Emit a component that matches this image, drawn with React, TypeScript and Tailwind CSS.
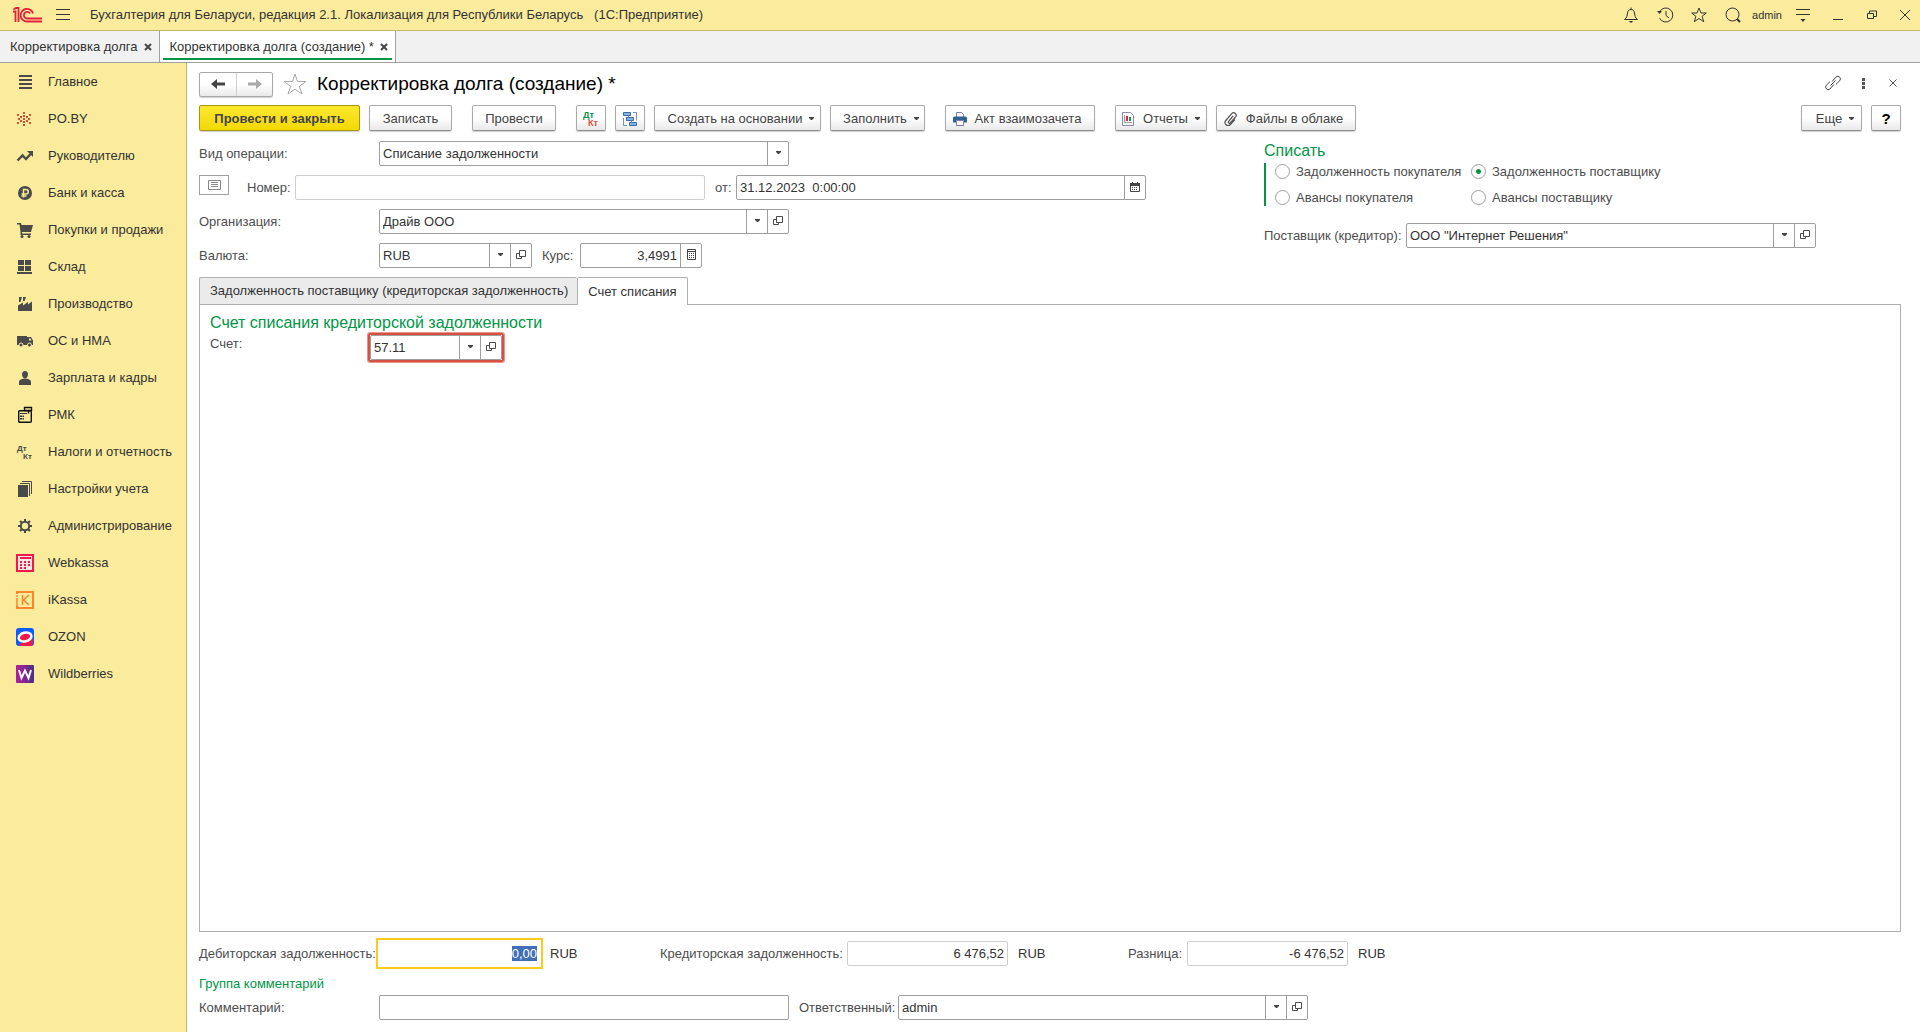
import { useEffect, useRef } from 'react';

const svgProps = {
  width: 18,
  height: 18,
  viewBox: '0 0 18 18',
  fill: 'none',
  'aria-hidden': true,
} as const;

// Section icons, drawn on an 18px canvas
const icons = {
  main: (
    <svg {...svgProps} fill="#4a4a4a">
      <path d="M3 2h13v2H3zM3 6h13v2H3zM3 10h13v2H3zM3 14h13v2H3z" />
    </svg>
  ),
  poby: (
    <svg {...svgProps} fill="#d8513f">
      <path d="M7 2h2v2H7zM7 5h2v2H7zM7 8h2v2H7zM7 11h2v2H7zM7 14h2v2H7zM4 6h2v2H4zM4 10h2v2H4zM10 6h2v2h-2zM10 10h2v2h-2zM1 4h2v2H1zM2 8h2v2H2zM1 12h2v2H1zM13 4h2v2h-2zM12 8h2v2h-2zM13 12h2v2h-2z" />
    </svg>
  ),
  chief: (
    <svg {...svgProps}>
      <path d="M1.500 13.500L6.500 8.500L10 12L14.500 7" stroke="#4a4a4a" strokeWidth="2.400" />
      <path d="M11 4h6v6z" fill="#4a4a4a" />
    </svg>
  ),
  bank: (
    <svg {...svgProps}>
      <circle cx="9" cy="9" r="7" fill="#4a4a4a" />
      <path d="M7.500 13.500V5.500h2.500a2.200 2.200 0 0 1 0 4.500H5.500M5.500 12h5" stroke="#faeb9d" strokeWidth="1.500" />
    </svg>
  ),
  trade: (
    <svg {...svgProps} fill="#4a4a4a">
      <path d="M1 2h4l.5 2H17l-2 7H6v1.500h9V14H4.500V11L3.500 3.500H1z" />
      <circle cx="6" cy="15.500" r="1.500" />
      <circle cx="13" cy="15.500" r="1.500" />
    </svg>
  ),
  stock: (
    <svg {...svgProps} fill="#4a4a4a">
      <path d="M2 2h6v5H2zM9 2h6v5H9zM2 8h6v5H2zM9 8h6v5H9zM1 14h15v2H1z" />
    </svg>
  ),
  production: (
    <svg {...svgProps} fill="#4a4a4a">
      <path d="M2 16V10.500l5-3v3l5-3.500v2.500l4-3V16zM3 2h3L4.500 7H3zM7 2h3L8.500 6H7z" />
    </svg>
  ),
  assets: (
    <svg {...svgProps} fill="#4a4a4a">
      <path d="M1 4h10v9H1z" />
      <path fillRule="evenodd" d="M11 5h4l2 3.500V13h-6zM13 6.500v2h2.500l-1-2z" />
      <circle cx="5" cy="13" r="2" stroke="#faeb9d" />
      <circle cx="13.500" cy="13" r="2" stroke="#faeb9d" />
    </svg>
  ),
  salary: (
    <svg {...svgProps} fill="#4a4a4a">
      <path d="M9 2c2 0 3 1.300 3 3.200S10.800 9.500 9 9.500 6 7.100 6 5.200 7 2 9 2z" />
      <path d="M3 16v-3c0-1.700 1.500-2.500 4-3.200h4c2.500.7 4 1.500 4 3.200v3z" />
    </svg>
  ),
  rmk: (
    <svg {...svgProps}>
      <rect x="2.700" y="4.700" width="12.600" height="11.600" rx="1" stroke="#111" strokeWidth="1.400" />
      <path d="M8.500 1.500h7v3h-7zM12.500 4.500v3" stroke="#111" strokeWidth="1.400" />
      <path d="M4 7h7v1H4zM4 9.500h2v1.500H4zM6.500 9.500H8v1.500H6.500zM4 12h2v1.500H4zM6.500 12H8v1.500H6.500z" fill="#333" />
    </svg>
  ),
  taxes: (
    <svg {...svgProps} fill="#4a4a4a" className="font-bold">
      <text x="1" y="8" fontSize="8">Дт</text>
      <text x="7" y="16" fontSize="8">Кт</text>
    </svg>
  ),
  settings: (
    <svg {...svgProps}>
      <path d="M2 5h10v12H2z" fill="#4a4a4a" />
      <path d="M4 3.500h9.500V16M6 1.500h9.500V14" stroke="#4a4a4a" />
    </svg>
  ),
  admin: (
    <svg {...svgProps} stroke="#4a4a4a" strokeWidth="2">
      <circle cx="9" cy="9" r="4.200" />
      <path d="M9 2v2.500M9 13.500V16M2 9h2.500M13.500 9H16M4 4l1.800 1.800M12.200 12.200L14 14M14 4l-1.800 1.800M5.800 12.200L4 14" />
    </svg>
  ),
  webkassa: (
    <svg {...svgProps}>
      <path d="M1 1h16v16H1z" fill="#fbe9e3" stroke="#f5164b" strokeWidth="2" />
      <path d="M4 3h11v2H4zM4 7h2v2H4zM8 7h2v2H8zM12 7h2v2h-2zM4 10h2v2H4zM8 10h2v2H8zM12 10h2v2h-2zM4 13h2v2H4zM8 13h2v2H8z" fill="#f5164b" />
    </svg>
  ),
  ikassa: (
    <svg {...svgProps} stroke="#fb852c">
      <path d="M1 3V1h16v16H1v-2" strokeWidth="2" />
      <path d="M1 4v2M1 7v9M6.500 4v10M13 4L7.500 9l5.500 5" strokeWidth="1.500" />
    </svg>
  ),
  ozon: (
    <svg {...svgProps}>
      <rect width="18" height="18" rx="3" fill="#0a5cff" />
      <path d="M3 16l14-5v4a3 3 0 0 1-3 3H5a3 3 0 0 1-2-2z" fill="#f5164b" />
      <ellipse cx="9" cy="9" rx="6.500" ry="4.300" transform="rotate(-14 9 9)" fill="#f5164b" stroke="#fff" strokeWidth="2.500" />
    </svg>
  ),
  wildberries: (
    <svg {...svgProps}>
      <defs>
        <linearGradient id="wb" x1="0" x2="1">
          <stop stopColor="#b01e9e" />
          <stop offset="1" stopColor="#4b2f86" />
        </linearGradient>
      </defs>
      <rect width="18" height="18" rx="1" fill="url(#wb)" />
      <path d="M3 5l2.500 8L9 5.500l3.500 7.500L15 5" stroke="#fff" strokeWidth="2" />
    </svg>
  ),
};

const sections = [
  { title: 'Главное', icon: icons.main },
  { title: 'PO.BY', icon: icons.poby },
  { title: 'Руководителю', icon: icons.chief },
  { title: 'Банк и касса', icon: icons.bank },
  { title: 'Покупки и продажи', icon: icons.trade },
  { title: 'Склад', icon: icons.stock },
  { title: 'Производство', icon: icons.production },
  { title: 'ОС и НМА', icon: icons.assets },
  { title: 'Зарплата и кадры', icon: icons.salary },
  { title: 'РМК', icon: icons.rmk },
  { title: 'Налоги и отчетность', icon: icons.taxes },
  { title: 'Настройки учета', icon: icons.settings },
  { title: 'Администрирование', icon: icons.admin },
  { title: 'Webkassa', icon: icons.webkassa },
  { title: 'iKassa', icon: icons.ikassa },
  { title: 'OZON', icon: icons.ozon },
  { title: 'Wildberries', icon: icons.wildberries },
];

const writeOffKinds = [
  { id: 'buyer-debt', title: 'Задолженность покупателя' },
  { id: 'supplier-debt', title: 'Задолженность поставщику' },
  { id: 'buyer-advance', title: 'Авансы покупателя' },
  { id: 'supplier-advance', title: 'Авансы поставщику' },
];

function Caret() {
  return (
    <svg width="5" height="3" viewBox="0 0 5 3" aria-hidden="true" className="shrink-0">
      <path d="M0 0h5v1L3 3H2L0 1z" fill="#444" />
    </svg>
  );
}

const fieldIcons = {
  list: <Caret />,
  open: (
    <svg width="10" height="10" viewBox="0 0 10 10" fill="none" stroke="#4a4a4a" aria-hidden="true">
      <path d="M3.500.5h6v6h-6zM3 3.500H.5v5h5V7" />
    </svg>
  ),
  calendar: (
    <svg width="10" height="10" viewBox="0 0 10 10" fill="none" aria-hidden="true">
      <path d="M.5 1.500h9v8h-9z" stroke="#444" />
      <path d="M0 1h10v3H0zM2 0h1v1H2zM7 0h1v1H7zM2 5h1v1H2zM4 5h1v1H4zM6 5h1v1H6zM2 7h1v1H2zM4 7h1v1H4zM6 7h1v1H6z" fill="#444" />
    </svg>
  ),
  calc: (
    <svg width="9" height="11" viewBox="0 0 9 11" fill="none" aria-hidden="true">
      <path d="M.5.500h8v10h-8zM1 2.500h7" stroke="#444" />
      <path d="M2 4h1v1H2zM4 4h1v1H4zM6 4h1v1H6zM2 6h1v1H2zM4 6h1v1H4zM6 6h1v1H6zM2 8h1v1H2zM4 8h1v1H4zM6 8h1v1H6z" fill="#444" />
    </svg>
  ),
};

const fieldButtonTitles = {
  list: 'Выбрать из списка',
  open: 'Открыть',
  calendar: 'Календарь',
  calc: 'Калькулятор',
};

interface FieldProps {
  id: string;
  value?: string;
  width: string;
  buttons?: (keyof typeof fieldIcons)[];
  right?: boolean;
  muted?: boolean;
}

function Field({ id, value = '', width, buttons = [], right, muted }: FieldProps) {
  return (
    <div className={`${width} flex h-[25px] rounded-xs border bg-white ${muted ? 'border-[#cfcfcf]' : 'border-[#9e9e9e]'}`}>
      <input
        id={id}
        type="text"
        defaultValue={value}
        readOnly={muted}
        className={`min-w-0 flex-1 bg-transparent px-[3px] text-[#333] outline-none ${right ? 'text-right' : ''}`}
      />
      {buttons.map((name) => (
        <button
          key={name}
          type="button"
          aria-label={fieldButtonTitles[name]}
          className="flex w-[21px] shrink-0 items-center justify-center border-l border-[#9e9e9e] pb-[2px]"
        >
          {fieldIcons[name]}
        </button>
      ))}
    </div>
  );
}

interface ToolButtonProps {
  children?: React.ReactNode;
  label?: string;
  className?: string;
  menu?: boolean;
}

function ToolButton({ children, label, className = '', menu }: ToolButtonProps) {
  return (
    <button
      type="button"
      aria-label={label}
      className={`flex h-[26px] shrink-0 items-center justify-center whitespace-nowrap rounded-xs border border-[#a9a9a9] border-b-[#8f8f8f] bg-linear-to-b from-white from-50% to-[#e9e9e9] pt-px shadow-[0_1px_1px_#d0d0d0] ${className}`}
    >
      {children}
      {menu && <span className="ml-[7px]"><Caret /></span>}
    </button>
  );
}

function TitleBar() {
  return (
    <header className="flex h-[31px] items-center border-b border-[#c2b763] bg-[#faeb9d] pl-3">
      <svg width="31" height="16" viewBox="0 0 31 16" fill="none" stroke="#e6203a" strokeWidth="1.800" role="img" aria-label="1С">
        <path d="M1 4.500h2.500v10.500M1.500 2.500L4 1h2.500v14" />
        <path d="M21 6.500a6.300 6.300 0 1 0-6 8h15M18 6.500a3.300 3.300 0 1 0-3 5h15" />
      </svg>
      <button type="button" aria-label="Меню функций" className="ml-3">
        <svg width="16" height="14" viewBox="0 0 16 14" stroke="#333" aria-hidden="true">
          <path d="M1 1.500h14M1 6.500h14M1 11.500h14" />
        </svg>
      </button>
      <span className="ml-[19px] flex-1 whitespace-pre text-[#333]">
        Бухгалтерия для Беларуси, редакция 2.1. Локализация для Республики Беларусь   (1С:Предприятие)
      </span>
      <div className="flex items-center">
        <button type="button" aria-label="Уведомления" className="flex w-[34px] justify-center">
          <svg width="16" height="16" viewBox="0 0 16 16" fill="none" stroke="#333" aria-hidden="true">
            <path d="M1.500 12.500c2.500-2 2.500-3.500 3-6.500C5 3.500 6 2.500 8 2.500s3 1 3.500 3.500c.5 3 .5 4.500 3 6.500zM8 .5v2" />
            <path d="M6 14h4l-1 1.500H7z" fill="#333" stroke="none" />
          </svg>
        </button>
        <button type="button" aria-label="История" className="flex w-[34px] justify-center">
          <svg width="17" height="16" viewBox="0 0 17 16" fill="none" stroke="#333" aria-hidden="true">
            <path d="M2.500 5a7 7 0 1 1 0 6M9 4v4.500l3 2.500" />
            <path d="M0 4l5 0-2.500 3z" fill="#333" stroke="none" />
          </svg>
        </button>
        <button type="button" aria-label="Избранное" className="flex w-[34px] justify-center">
          <svg width="16" height="16" viewBox="0 0 16 16" fill="none" stroke="#333" aria-hidden="true">
            <path d="M8 1l2 5h5.300l-4.200 3.300 1.600 5.400L8 11.500l-4.700 3.200 1.600-5.400L.7 6H6z" />
          </svg>
        </button>
        <button type="button" aria-label="Поиск" className="flex w-[34px] justify-center">
          <svg width="16" height="16" viewBox="0 0 16 16" fill="none" stroke="#333" aria-hidden="true">
            <circle cx="7.500" cy="7.500" r="6.500" />
            <path d="M12 12l3 3" strokeWidth="2" />
          </svg>
        </button>
        <span className="mx-[2px] text-[11px] text-[#333]">admin</span>
        <button type="button" aria-label="Сервис" className="flex w-[38px] justify-center">
          <svg width="14" height="14" viewBox="0 0 14 14" aria-hidden="true">
            <path d="M0 1.500h14M0 6.500h14" stroke="#333" />
            <path d="M4.500 11h5L7 14z" fill="#333" />
          </svg>
        </button>
        <button type="button" aria-label="Свернуть" className="flex w-8 justify-center">
          <svg width="10" height="10" viewBox="0 0 10 10" stroke="#333" aria-hidden="true">
            <path d="M0 9.500h10" />
          </svg>
        </button>
        <button type="button" aria-label="Развернуть" className="flex w-9 justify-center">
          <svg width="10" height="10" viewBox="0 0 10 10" fill="none" stroke="#333" aria-hidden="true">
            <path d="M.5 3.500h6v5h-6zM2.500 3V1h7v5.500H7" />
          </svg>
        </button>
        <button type="button" aria-label="Закрыть" className="flex w-[30px] justify-center">
          <svg width="10" height="10" viewBox="0 0 10 10" stroke="#333" aria-hidden="true">
            <path d="M0 0l10 10M10 0L0 10" />
          </svg>
        </button>
      </div>
    </header>
  );
}

function CloseMark() {
  return (
    <svg width="8" height="8" viewBox="0 0 8 8" stroke="#444" strokeWidth="2" aria-hidden="true">
      <path d="M1 1l6 6M7 1L1 7" />
    </svg>
  );
}

function WindowTabs() {
  return (
    <nav className="flex h-8 border-b border-[#a0a0a0] bg-[#f1f1f1] text-[#333]">
      <div className="flex items-center gap-[6px] border-r border-[#a0a0a0] pl-[10px] pr-[7px]">
        <a href="#list">Корректировка долга</a>
        <button type="button" aria-label="Закрыть вкладку"><CloseMark /></button>
      </div>
      <div className="border-r border-[#a0a0a0] bg-white px-[3px]">
        <div className="flex h-[29px] items-center gap-[6px] border-b-2 border-[#009646] pl-[7px] pr-1 pt-1">
          <a href="#new">Корректировка долга (создание) *</a>
          <button type="button" aria-label="Закрыть вкладку"><CloseMark /></button>
        </div>
      </div>
    </nav>
  );
}

function Sidebar() {
  return (
    <aside className="w-[187px] shrink-0 border-r border-[#c2b763] bg-[#faeb9d]">
      {sections.map((section) => (
        <a key={section.title} href="#section" className="flex h-[37px] items-center gap-[14px] whitespace-nowrap pl-4 pt-px text-[#333]">
          {section.icon}
          {section.title}
        </a>
      ))}
    </aside>
  );
}

function FormHeader() {
  return (
    <div className="-mr-2 flex h-[26px] items-center">
      <div className="flex h-[25px] rounded-xs border border-[#a9a9a9] bg-linear-to-b from-white from-50% to-[#e9e9e9] shadow-[0_1px_1px_#d0d0d0]">
        <button type="button" aria-label="Назад" className="flex w-9 items-center justify-center">
          <svg width="14" height="10" viewBox="0 0 14 10" aria-hidden="true">
            <path d="M0 5l6-5v3.500h8v3H6V10z" fill="#444" />
          </svg>
        </button>
        <button type="button" aria-label="Вперед" className="flex w-9 items-center justify-center border-l border-[#d0d0d0]">
          <svg width="14" height="10" viewBox="0 0 14 10" aria-hidden="true">
            <path d="M14 5L8 0v3.500H0v3h8V10z" fill="#aaa" />
          </svg>
        </button>
      </div>
      <button type="button" aria-label="Добавить в избранное" className="ml-[10px]">
        <svg width="24" height="22" viewBox="0 0 24 22" fill="none" stroke="#aaa" aria-hidden="true">
          <path d="M12 1l2.500 7.500H23l-6.700 4.800L19 21l-7-4.800L5 21l2.700-7.700L1 8.500h8.500z" />
        </svg>
      </button>
      <h1 className="ml-[10px] flex-1 text-[19px] leading-6 text-black">Корректировка долга (создание) *</h1>
      <button type="button" aria-label="Получить ссылку" className="flex w-8 justify-center pb-[2px]">
        <svg width="16" height="16" viewBox="0 0 16 16" fill="none" stroke="#444" aria-hidden="true">
          <path d="M7 6.500l4.200-4.600a2.600 2.600 0 0 1 3.600 3.700L11 9.300M9 9.500l-4.200 4.600a2.600 2.600 0 0 1-3.600-3.700L5 6.700M5.500 10.500l5-5" />
        </svg>
      </button>
      <button type="button" aria-label="Дополнительно" className="flex w-7 justify-center pb-[2px]">
        <svg width="3" height="11" viewBox="0 0 3 11" fill="#555" aria-hidden="true">
          <path d="M0 0h3v3H0zM0 4h3v3H0zM0 8h3v3H0z" />
        </svg>
      </button>
      <button type="button" aria-label="Закрыть форму" className="flex w-8 justify-center pb-[2px]">
        <svg width="8" height="8" viewBox="0 0 8 8" stroke="#555" aria-hidden="true">
          <path d="M.5.5l7 7M7.500.5l-7 7" />
        </svg>
      </button>
    </div>
  );
}

function Toolbar() {
  return (
    <div className="mt-2 flex gap-[9px] text-[#444]">
      <button
        type="button"
        className="h-[26px] w-[161px] shrink-0 rounded-xs border border-[#a8960c] bg-linear-to-b from-[#ffe72c] to-[#f3d900] pt-px font-bold text-[#444] shadow-[0_1px_1px_#d0d0d0]"
      >
        Провести и закрыть
      </button>
      <ToolButton className="w-[83px]">Записать</ToolButton>
      <ToolButton className="ml-[11px] w-[84px]">Провести</ToolButton>
      <ToolButton className="ml-[11px] w-[30px]" label="Движения документа">
        <svg width="18" height="18" viewBox="0 0 18 18" className="font-bold" aria-hidden="true">
          <text x="1" y="8" fontSize="9" fill="#009646">Дт</text>
          <text x="6" y="16" fontSize="9" fill="#e05040">Кт</text>
        </svg>
      </ToolButton>
      <ToolButton className="w-[30px]" label="Структура подчиненности">
        <svg width="16" height="16" viewBox="0 0 16 16" fill="none" aria-hidden="true">
          <path d="M4 1.500H1.500v3h7v-3zM4.500 6.500h7v3h-7zM7.500 11.500h7v3h-7z" fill="#82b4ea" stroke="#3a6ca5" />
          <path d="M6.500 4.500v2M9.500 9.500v2M11 1.500h3.500v8M1.500 7v7.500H5" stroke="#7a8fa8" />
        </svg>
      </ToolButton>
      <ToolButton className="w-[167px] pl-[7px]" menu>Создать на основании</ToolButton>
      <ToolButton className="w-[95px] pl-[7px]" menu>Заполнить</ToolButton>
      <ToolButton className="ml-[11px] w-[150px] gap-2 pr-[6px]">
        <svg width="14" height="14" viewBox="0 0 14 14" fill="none" aria-hidden="true">
          <path d="M3.500 5V.5h5l2 2V5" stroke="#7a7ab0" fill="#fff" />
          <path d="M0 6q0-1.500 1.500-1.500h11Q14 4.500 14 6v4.500h-3V8H3v2.500H0z" fill="#2f6290" />
          <path d="M3.500 8.500h7v5h-7z" stroke="#7a7ab0" fill="#fff" />
        </svg>
        Акт взаимозачета
      </ToolButton>
      <ToolButton className="ml-[11px] w-[92px]" menu>
        <svg width="12" height="14" viewBox="0 0 12 14" fill="none" aria-hidden="true" className="mr-[9px]">
          <path d="M.5.500h8l3 3v10H.5z" stroke="#8b8bab" />
          <path d="M2.500 3v7.500H10" stroke="#999" />
          <path d="M4 4h2v5H4z" fill="#e0203c" />
          <path d="M7 5h2v4H7z" fill="#149848" />
        </svg>
        Отчеты
      </ToolButton>
      <ToolButton className="w-[140px] gap-[9px] pr-[5px]">
        <svg width="13" height="14" viewBox="0 0 13 14" fill="none" stroke="#555" strokeWidth="1.200" aria-hidden="true">
          <path d="M9 4L4.500 9.500a1.200 1.200 0 0 0 1.800 1.500L11.500 5a2.500 2.500 0 0 0-3.800-3.300L1.800 8.500a3 3 0 0 0 4.500 4L11 7.500" />
        </svg>
        Файлы в облаке
      </ToolButton>
      <ToolButton className="ml-auto w-[61px] pl-[7px]" menu>Еще</ToolButton>
      <ToolButton className="w-[30px]" label="Справка"><b className="text-[15px] text-black">?</b></ToolButton>
    </div>
  );
}

function Requisites() {
  return (
    <div className="mt-[10px] flex">
      <div className="flex min-w-0 flex-1 flex-col gap-[9px]">
        <div className="flex items-center">
          <label htmlFor="operation" className="w-[180px]">Вид операции:</label>
          <Field id="operation" value="Списание задолженности" width="w-[410px]" buttons={['list']} />
        </div>
        <div className="flex items-center">
          <button type="button" aria-label="Состояние" className="mb-auto flex h-5 w-[30px] items-center justify-center border border-[#a0a0a0]">
            <svg width="13" height="10" viewBox="0 0 13 10" fill="none" stroke="#888" aria-hidden="true">
              <path d="M.5.500h12v9H.5zM3 2.500h7M3 4.500h7M3 6.500h7" />
            </svg>
          </button>
          <label htmlFor="number" className="ml-[18px] w-12">Номер:</label>
          <Field id="number" width="w-[410px]" muted />
          <label htmlFor="date" className="ml-[10px] w-[21px]">от:</label>
          <Field id="date" value="31.12.2023  0:00:00" width="w-[410px]" buttons={['calendar']} />
        </div>
        <div className="flex items-center">
          <label htmlFor="company" className="w-[180px]">Организация:</label>
          <Field id="company" value="Драйв ООО" width="w-[410px]" buttons={['list', 'open']} />
        </div>
        <div className="flex items-center">
          <label htmlFor="currency" className="w-[180px]">Валюта:</label>
          <Field id="currency" value="RUB" width="w-[153px]" buttons={['list', 'open']} />
          <label htmlFor="rate" className="ml-[10px] w-[38px]">Курс:</label>
          <Field id="rate" value="3,4991" width="w-[122px]" buttons={['calc']} right />
        </div>
      </div>

      <div className="w-[637px]">
        <fieldset>
          <legend className="text-base leading-5 text-[#009646]">Списать</legend>
          <div className="mt-[2px] grid w-fit grid-cols-[196px_auto] gap-y-[9px] border-l-2 border-[#009646] pl-[9px]">
            {writeOffKinds.map((kind) => (
              <div key={kind.id} className="flex h-[17px] items-center gap-[6px] whitespace-nowrap">
                <input
                  type="radio"
                  id={kind.id}
                  name="write-off"
                  defaultChecked={kind.id === 'supplier-debt'}
                  className="size-[15px] appearance-none rounded-full border border-[#9e9e9e] bg-white checked:bg-[radial-gradient(circle,#009646_2px,white_3px)]"
                />
                <label htmlFor={kind.id}>{kind.title}</label>
              </div>
            ))}
          </div>
        </fieldset>
        <div className="mt-[17px] flex items-center">
          <label htmlFor="supplier" className="w-[142px] whitespace-nowrap">Поставщик (кредитор):</label>
          <Field id="supplier" value={'ООО "Интернет Решения"'} width="w-[410px]" buttons={['list', 'open']} />
        </div>
      </div>
    </div>
  );
}

function AccountPages() {
  return (
    <div className="mt-[9px] flex flex-1 flex-col">
      <div role="tablist" className="flex h-[27px]">
        <button type="button" role="tab" aria-selected="false" className="-mb-px rounded-t-xs border border-r-0 border-[#b0b0b0] bg-[#ebebeb] pl-[10px] pr-[9px] text-[#333]">
          Задолженность поставщику (кредиторская задолженность)
        </button>
        <button type="button" role="tab" aria-selected="true" className="z-10 -mb-px rounded-t-xs border border-b-0 border-[#b0b0b0] bg-white px-[10px] text-[#333]">
          Счет списания
        </button>
      </div>
      <div role="tabpanel" className="flex-1 border border-[#b0b0b0] pl-[10px] pt-[7px]">
        <h2 className="text-base leading-[22px] text-[#009646]">Счет списания кредиторской задолженности</h2>
        <div className="flex">
          <label htmlFor="account" className="w-[158px] leading-5">Счет:</label>
          <div className="-mt-px rounded-xs border-2 border-[#d8503f] ring-1 ring-[#d8503f]/60">
            <Field id="account" value="57.11" width="w-[132px]" buttons={['list', 'open']} />
          </div>
        </div>
      </div>
    </div>
  );
}

function Totals() {
  const debitRef = useRef<HTMLInputElement>(null);

  useEffect(() => {
    debitRef.current?.focus();
    debitRef.current?.select();
  }, []);

  return (
    <div className="mt-[6px] flex h-[31px] items-center">
      <label htmlFor="debit" className="w-[177px] whitespace-nowrap">Дебиторская задолженность:</label>
      <input
        ref={debitRef}
        id="debit"
        type="text"
        defaultValue="0,00"
        className="h-[31px] w-[167px] border-2 border-[#fbcb1e] px-1 text-right text-[#333] outline-none selection:bg-[#4270b8] selection:text-white"
      />
      <span className="ml-[7px] w-[110px] text-[#333]">RUB</span>
      <label htmlFor="credit" className="w-[187px] whitespace-nowrap">Кредиторская задолженность:</label>
      <Field id="credit" value="6 476,52" width="w-[161px]" right muted />
      <span className="ml-[10px] w-[110px] text-[#333]">RUB</span>
      <label htmlFor="difference" className="w-[59px]">Разница:</label>
      <Field id="difference" value="-6 476,52" width="w-[161px]" right muted />
      <span className="ml-[10px] text-[#333]">RUB</span>
    </div>
  );
}

export default function App() {
  return (
    <div className="flex min-h-screen flex-col bg-white font-['Liberation_Sans',Arial,sans-serif] text-[13px] leading-5 text-[#4d4d4d]">
      <TitleBar />
      <WindowTabs />
      <div className="flex flex-1">
        <Sidebar />
        <main className="flex min-w-0 flex-1 flex-col pb-3 pl-3 pr-[19px] pt-2">
          <FormHeader />
          <Toolbar />
          <Requisites />
          <AccountPages />
          <Totals />
          <h2 className="mt-[5px] text-[#009646]">Группа комментарий</h2>
          <div className="mt-px flex items-center">
            <label htmlFor="comment" className="w-[180px]">Комментарий:</label>
            <Field id="comment" width="w-[410px]" />
            <label htmlFor="responsible" className="ml-[10px] w-[99px]">Ответственный:</label>
            <Field id="responsible" value="admin" width="w-[410px]" buttons={['list', 'open']} />
          </div>
        </main>
      </div>
    </div>
  );
}
